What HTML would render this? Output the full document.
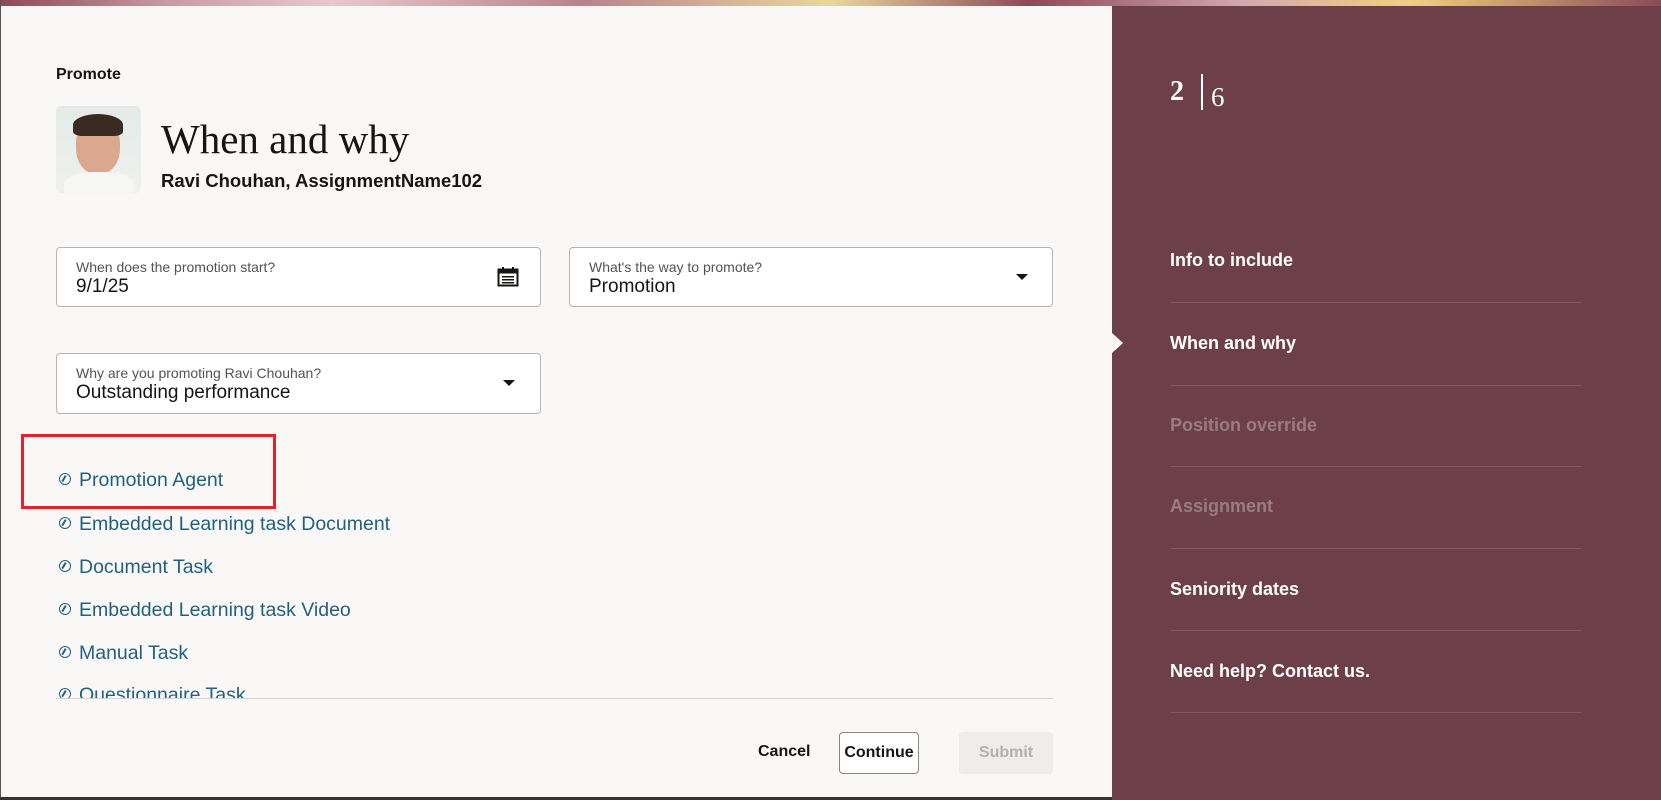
<!DOCTYPE html>
<html><head><meta charset="utf-8"><style>
*{margin:0;padding:0;box-sizing:border-box}
body{width:1661px;height:800px;overflow:hidden;background:#faf8f7;font-family:"Liberation Sans",sans-serif;position:relative;color:#161513}
.a{position:absolute}
.strip{left:0;top:0;width:1661px;height:6px;background:linear-gradient(90deg,#8a4a58 0,#c89aa5 10%,#e8c9cf 20%,#b9828e 35%,#e9d7a0 50%,#8a4a58 62%,#d4a9b2 75%,#f0d080 85%,#8a4a58 100%)}
.field{background:#fff;border:1px solid #b8b4b0;border-radius:4px}
.lbl{font-size:14px;color:#55524f;position:absolute;left:19px;top:11px}
.val{font-size:19px;color:#161513;position:absolute;left:19px;top:28px}
.caret{position:absolute;width:0;height:0;border-left:6px solid transparent;border-right:6px solid transparent;border-top:6px solid #161513}
.lnk{left:58px;font-size:19.5px;color:#22617d;line-height:22px}
.lnk i{display:inline-block;width:12px;height:12px;border:1.5px solid #22617d;border-radius:50%;margin:0 8px 0 1px;vertical-align:1px;position:relative}
.lnk i:after{content:"";position:absolute;left:3px;top:1px;width:1.5px;height:7px;background:#22617d;transform:rotate(30deg)}
.panel{left:1112px;top:6px;width:549px;height:794px;background:#6d3f48}
.it{left:1170px;font-size:18px;font-weight:bold;color:#fff}
.dis{color:#9c7a81}
.sep{left:1170px;width:412px;height:1px;background:#82555e}
</style></head><body>
<div class="a strip"></div>
<div class="a" style="left:0;top:0;width:1px;height:800px;background:#555"></div>
<div class="a" style="left:0;top:797px;width:1661px;height:3px;background:#333"></div>
<div class="a" style="left:56px;top:66px;font-size:16px;font-weight:bold;color:#161513">Promote</div>
<div class="a" style="left:56px;top:106px;width:85px;height:87px;border-radius:6px;background:linear-gradient(#e3ebe8,#eef1ef);overflow:hidden">
 <div class="a" style="left:20px;top:12px;width:44px;height:56px;border-radius:45%;background:#d9a88e"></div>
 <div class="a" style="left:17px;top:8px;width:50px;height:22px;border-radius:50% 50% 20% 20%;background:#3a2a22"></div>
 <div class="a" style="left:8px;top:66px;width:70px;height:30px;border-radius:40% 40% 0 0;background:#f6f6f4"></div>
</div>
<div class="a" style="left:161px;top:115px;font-family:'Liberation Serif',serif;font-size:41px;color:#161513">When and why</div>
<div class="a" style="left:161px;top:170px;font-size:18.5px;font-weight:bold;color:#161513">Ravi Chouhan, AssignmentName102</div>
<div class="a field" style="left:56px;top:247px;width:485px;height:60px"><div class="lbl">When does the promotion start?</div><div class="val">9/1/25</div>
 <svg class="a" style="left:440px;top:18px" width="22" height="22" viewBox="0 0 22 22"><rect x="1.5" y="3.5" width="19" height="16" fill="none" stroke="#161513" stroke-width="2"/><rect x="1.5" y="3.5" width="19" height="4" fill="#161513"/><rect x="5" y="1" width="2" height="4" fill="#161513"/><rect x="15" y="1" width="2" height="4" fill="#161513"/><g fill="#161513"><rect x="5" y="10" width="12" height="1.5"/><rect x="5" y="13" width="12" height="1.5"/><rect x="5" y="16" width="12" height="1.5"/></g></svg></div>
<div class="a field" style="left:569px;top:247px;width:484px;height:60px"><div class="lbl">What's the way to promote?</div><div class="val">Promotion</div><div class="caret" style="left:446px;top:26px"></div></div>
<div class="a field" style="left:56px;top:353px;width:485px;height:61px"><div class="lbl">Why are you promoting Ravi Chouhan?</div><div class="val">Outstanding performance</div><div class="caret" style="left:446px;top:26px"></div></div>
<div class="a" style="left:21px;top:434px;width:255px;height:75px;border:3px solid #e0242a"></div>
<div class="a lnk" style="top:469px"><i></i>Promotion Agent</div>
<div class="a lnk" style="top:513px"><i></i>Embedded Learning task Document</div>
<div class="a lnk" style="top:556px"><i></i>Document Task</div>
<div class="a lnk" style="top:599px"><i></i>Embedded Learning task Video</div>
<div class="a lnk" style="top:642px"><i></i>Manual Task</div>
<div class="a" style="left:0;top:684px;width:1100px;height:14px;overflow:hidden"><div class="a lnk" style="top:0"><i></i>Questionnaire Task</div></div>
<div class="a" style="left:56px;top:698px;width:997px;height:1px;background:#d6d2ce"></div>
<div class="a" style="left:758px;top:743px;font-size:16px;font-weight:bold">Cancel</div>
<div class="a" style="left:839px;top:732px;width:80px;height:42px;border:1px solid #8a8683;border-radius:4px;background:#fff;font-size:16px;font-weight:bold;text-align:center;line-height:40px">Continue</div>
<div class="a" style="left:959px;top:732px;width:94px;height:42px;border-radius:4px;background:#efedeb;color:#b3b0ad;font-size:16px;font-weight:bold;text-align:center;line-height:42px">Submit</div>
<div class="a panel"></div>
<div class="a" style="left:1112px;top:333px;width:0;height:0;border-top:10px solid transparent;border-bottom:10px solid transparent;border-left:11px solid #faf8f7"></div>
<div class="a" style="left:1170px;top:76px;font-family:'Liberation Serif',serif;font-size:28px;font-weight:bold;color:#fff">2</div>
<div class="a" style="left:1201px;top:74px;width:1.5px;height:36px;background:#fff"></div>
<div class="a" style="left:1211px;top:82px;font-family:'Liberation Serif',serif;font-size:27px;color:#fff">6</div>
<div class="a it" style="top:250px">Info to include</div>
<div class="a sep" style="top:302px"></div>
<div class="a it" style="top:333px">When and why</div>
<div class="a sep" style="top:385px"></div>
<div class="a it dis" style="top:415px">Position override</div>
<div class="a sep" style="top:466px"></div>
<div class="a it dis" style="top:496px">Assignment</div>
<div class="a sep" style="top:548px"></div>
<div class="a it" style="top:579px">Seniority dates</div>
<div class="a sep" style="top:630px"></div>
<div class="a it" style="top:661px">Need help? Contact us.</div>
<div class="a sep" style="top:712px"></div>
</body></html>
